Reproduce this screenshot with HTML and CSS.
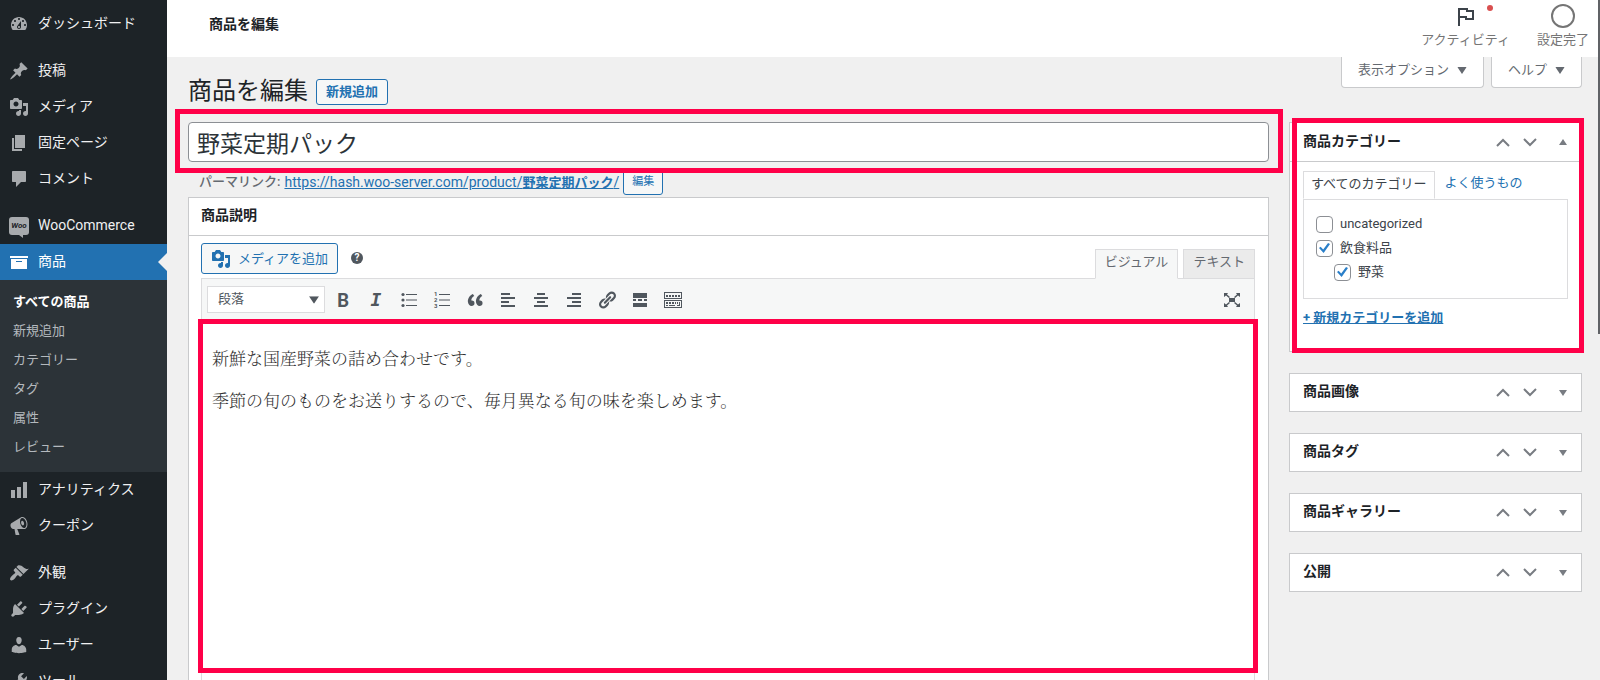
FILE: index.html
```html
<!DOCTYPE html>
<html lang="ja">
<head>
    <meta charset="UTF-8">
    <title>商品を編集</title>
    <link rel="stylesheet" href="styles.css">
</head>
<body>
    <svg class="sprite" aria-hidden="true">
        <symbol id="i-media" viewBox="0 0 20 20"><path d="M13 11V4c0-.55-.45-1-1-1h-1.67L9 1H5L3.67 3H2c-.55 0-1 .45-1 1v7c0 .55.45 1 1 1h10c.55 0 1-.45 1-1zM7 4.5c1.38 0 2.5 1.12 2.5 2.5S8.38 9.5 7 9.5 4.5 8.38 4.5 7 5.62 4.5 7 4.5zM14 6h5v10.500c0 1.38-1.12 2.5-2.5 2.5S14 17.88 14 16.5s1.12-2.5 2.5-2.5c.17 0 .34.02.5.05V9h-3V6zm-4 8.050V13h2v3.5c0 1.38-1.12 2.5-2.5 2.5S7 17.88 7 16.5 8.12 14 9.5 14c.17 0 .34.02.5.05z"/></symbol>
        <symbol id="i-up" viewBox="0 0 14 9"><path d="M1 8l6-6 6 6" fill="none" stroke="currentColor" stroke-width="2"/></symbol>
        <symbol id="i-down" viewBox="0 0 14 9"><path d="M1 1l6 6 6-6" fill="none" stroke="currentColor" stroke-width="2"/></symbol>
        <symbol id="i-tri" viewBox="0 0 8 6"><path d="M0 0h8L4 6z"/></symbol>
        <symbol id="i-tri-up" viewBox="0 0 8 6"><path d="M0 6h8L4 0z"/></symbol>
    </svg>

    <nav class="sidebar">
        <a class="item" href="#"><svg class="icon" viewBox="0 0 20 20"><path fill-rule="evenodd" d="M3.76 16h12.48c1.1-1.37 1.76-3.11 1.76-5 0-4.42-3.58-8-8-8s-8 3.58-8 8c0 1.89.66 3.63 1.76 5zM10 4c.55 0 1 .45 1 1s-.45 1-1 1-1-.45-1-1 .45-1 1-1zM6 6c.55 0 1 .45 1 1s-.45 1-1 1-1-.45-1-1 .45-1 1-1zm8 0c.55 0 1 .45 1 1s-.45 1-1 1-1-.45-1-1 .45-1 1-1zm-5.300 5.500L12 7v6c0 1.100-.9 2-2 2s-2-.9-2-2c0-.57.24-1.080.7-1.500zM4 10c.55 0 1 .45 1 1s-.45 1-1 1-1-.45-1-1 .45-1 1-1zm12 0c.55 0 1 .45 1 1s-.45 1-1 1-1-.45-1-1 .45-1 1-1zm-5 3c0-.55-.45-1-1-1s-1 .45-1 1 .45 1 1 1 1-.45 1-1z"/></svg><span>ダッシュボード</span></a>
        <a class="item group" href="#"><svg class="icon" viewBox="0 0 20 20"><path d="M10.44 3.02l1.82-1.82 6.36 6.35-1.83 1.82c-1.05-.68-2.48-.57-3.41.36l-.75.75c-.92.93-1.04 2.35-.35 3.41l-1.83 1.82-2.41-2.41-2.8 2.79c-.42.42-3.38 2.71-3.8 2.29s1.86-3.39 2.28-3.81l2.79-2.79L4.1 9.36l1.83-1.82c1.05.69 2.48.57 3.4-.36l.75-.75c.93-.92 1.05-2.35.36-3.41z"/></svg><span>投稿</span></a>
        <a class="item" href="#"><svg class="icon"><use href="#i-media"/></svg><span>メディア</span></a>
        <a class="item" href="#"><svg class="icon" viewBox="0 0 20 20"><path d="M6 15V2h10v13H6zm-1 1h8v2H3V5h2v11z"/></svg><span>固定ページ</span></a>
        <a class="item" href="#"><svg class="icon" viewBox="0 0 20 20"><path d="M4 2h12c.6 0 1 .4 1 1v9c0 .6-.4 1-1 1h-4l-5 5v-5H4c-.6 0-1-.4-1-1V3c0-.6.4-1 1-1z"/></svg><span>コメント</span></a>
        <a class="item group" href="#"><span class="woo">Woo</span><span>WooCommerce</span></a>
        <a class="item current" href="#"><svg class="icon" viewBox="0 0 20 20"><path d="M19 4v2H1V4h18zM2 7h16v10H2V7zm11 3V9H7v1h6z"/></svg><span>商品</span></a>
        <div class="submenu">
            <a class="active" href="#">すべての商品</a>
            <a href="#">新規追加</a>
            <a href="#">カテゴリー</a>
            <a href="#">タグ</a>
            <a href="#">属性</a>
            <a href="#">レビュー</a>
        </div>
        <a class="item" href="#"><svg class="icon" viewBox="0 0 20 20"><path d="M18 18V2h-4v16h4zm-6 0V7H8v11h4zm-6 0v-8H2v8h4z"/></svg><span>アナリティクス</span></a>
        <a class="item" href="#"><svg class="icon" viewBox="0 0 20 20"><path d="M18.15 5.94c.46 1.62.38 3.22-.02 4.48-.42 1.28-1.26 2.18-2.3 2.48-.16.06-.26.06-.4.06-.06.02-.12.02-.18.02-.06.02-.14.02-.22.02h-6.8l2.22 5.5c.02.14-.06.26-.14.34-.08.1-.24.16-.34.16H6.95c-.1 0-.26-.06-.34-.16-.08-.08-.16-.2-.14-.34l-1-5.5H4.25l-.02-.02c-.5.06-1.08-.18-1.54-.62s-.88-1.08-1.06-1.88c-.24-.8-.2-1.56-.02-2.2.18-.62.58-1.08 1.06-1.3l.02-.02 9-5.4c.1-.06.18-.1.24-.16.06-.04.14-.08.24-.12.16-.08.28-.12.5-.18 1.04-.3 2.24.1 3.22.98s1.84 2.24 2.26 3.86zm-2.58 5.98h-.02c.4-.1.74-.34 1.04-.7.58-.7.86-1.76.86-3.04 0-.64-.1-1.3-.28-1.98-.34-1.36-1.02-2.5-1.78-3.24s-1.68-1.1-2.46-.88c-.82.22-1.4.96-1.7 2-.32 1.04-.28 2.36.06 3.72.38 1.36 1 2.5 1.8 3.24.78.74 1.62 1.1 2.48.88zm-2.54-7.08c.22-.04.42-.02.62.04.38.16.76.48 1.02 1s.42 1.2.42 1.78c0 .3-.04.56-.12.8-.18.48-.44.84-.86.94-.34.1-.8-.06-1.14-.4s-.64-.86-.78-1.5c-.18-.62-.12-1.24.02-1.72s.48-.84.82-.94z"/></svg><span>クーポン</span></a>
        <a class="item group" href="#"><svg class="icon" viewBox="0 0 20 20"><path d="M14.48 11.06L7.41 3.99l1.5-1.5c.5-.56 2.3-.47 3.51.32 1.21.8 1.43 1.28 2.91 2.1 1.18.64 2.45 1.26 4.45.85zm-.71.71L6.7 4.7 4.93 6.47c-.39.39-.39 1.02 0 1.41l1.06 1.06c.39.39.39 1.03 0 1.42-.6.6-1.43 1.11-2.21 1.69-.35.26-.7.53-1.01.84C1.43 14.23.4 16.08 1.4 17.07c.99 1 2.84-.03 4.18-1.36.31-.31.58-.66.85-1.02.57-.78 1.08-1.61 1.69-2.21.39-.39 1.02-.39 1.41 0l1.06 1.06c.39.39 1.02.39 1.41 0z"/></svg><span>外観</span></a>
        <a class="item" href="#"><svg class="icon" viewBox="0 0 20 20"><path d="M13.11 4.36L9.87 7.6 8 5.73l3.24-3.24c.35-.34 1.05-.2 1.56.32.52.51.66 1.21.31 1.55zm-8 1.77l.91-1.12 9.01 9.01-1.19.84c-.71.71-2.63 1.16-3.82 1.16H6.14L4.9 17.26c-.59.59-1.54.59-2.12 0-.59-.58-.59-1.53 0-2.12l1.24-1.24v-3.88c0-1.13.4-3.19 1.09-3.89zm7.26 3.97l3.24-3.24c.34-.35 1.04-.21 1.55.31.52.51.66 1.21.31 1.55l-3.24 3.25z"/></svg><span>プラグイン</span></a>
        <a class="item" href="#"><svg class="icon" viewBox="0 0 20 20"><path d="M10 9.25c-2.27 0-2.73-3.44-2.73-3.44C7 4.02 7.82 2 9.97 2c2.16 0 2.98 2.02 2.71 3.81 0 0-.41 3.44-2.68 3.44zm0 2.57L12.72 10c2.39 0 4.52 2.33 4.52 4.53v2.49s-3.65 1.13-7.24 1.13c-3.65 0-7.24-1.13-7.24-1.13v-2.49c0-2.25 1.94-4.48 4.47-4.48z"/></svg><span>ユーザー</span></a>
        <a class="item" href="#"><svg class="icon" viewBox="0 0 20 20"><path d="M16.68 9.77c-1.34 1.34-3.3 1.67-4.95.99l-5.41 6.52c-.99.99-2.59.99-3.58 0s-.99-2.59 0-3.57l6.52-5.42c-.68-1.65-.35-3.61.99-4.95 1.28-1.28 3.12-1.62 4.72-1.06l-2.89 2.89 2.82 2.82 2.86-2.87c.53 1.58.18 3.39-1.08 4.65z"/></svg><span>ツール</span></a>
    </nav>

    <div class="page">
        <header class="topbar">
            <strong>商品を編集</strong>
            <div class="activity">
                <button type="button">
                    <svg width="18" height="22" viewBox="0 0 18 22"><path d="M2 20V3h8v2h6v8H9v-2H2" fill="none" stroke="#3c434a" stroke-width="2"/></svg>
                    <span>アクティビティ</span>
                    <i class="dot"></i>
                </button>
                <button type="button">
                    <svg width="24" height="24" viewBox="0 0 24 24"><circle cx="12" cy="12" r="11" fill="none" stroke="#757575" stroke-width="2"/></svg>
                    <span>設定完了</span>
                </button>
            </div>
        </header>

        <div class="columns">
            <main class="main">
                <div class="heading">
                    <h1>商品を編集</h1>
                    <a class="add-new" href="#">新規追加</a>
                </div>
                <div class="title-wrap marked">
                    <input class="title" type="text" value="野菜定期パック" aria-label="商品名">
                </div>
                <div class="permalink">
                    <span>パーマリンク:</span>
                    <a href="#">https://hash.woo-server.com/product/<b>野菜定期パック</b>/</a>
                    <button type="button">編集</button>
                </div>

                <section class="box editor-box">
                    <h2>商品説明</h2>
                    <div class="editor">
                        <div class="editor-tools">
                            <button class="add-media" type="button"><svg class="icon"><use href="#i-media"/></svg>メディアを追加</button>
                            <span class="help">?</span>
                            <div class="editor-tabs">
                                <button class="on" type="button">ビジュアル</button>
                                <button type="button">テキスト</button>
                            </div>
                        </div>
                        <div class="toolbar">
                            <div class="format">
                                <select aria-label="書式"><option>段落</option></select>
                                <svg width="10" height="8" viewBox="0 0 8 6"><use href="#i-tri"/></svg>
                            </div>
                            <button type="button" class="bold">B</button>
                            <button type="button" class="italic">I</button>
                            <button type="button" aria-label="箇条書き"><svg viewBox="0 0 20 20"><path d="M7 4h11v1H7zm0 5.500h11v1H7zM7 15h11v1H7z"/><circle cx="4" cy="4.500" r="1.600"/><circle cx="4" cy="10" r="1.600"/><circle cx="4" cy="15.500" r="1.600"/></svg></button>
                            <button type="button" aria-label="番号付きリスト"><svg viewBox="0 0 20 20"><path d="M7 4h11v1H7zm0 5.500h11v1H7zM7 15h11v1H7z"/><text x="2" y="6">1</text><text x="2" y="12">2</text><text x="2" y="18">3</text></svg></button>
                            <button type="button" aria-label="引用"><svg viewBox="0 0 20 20"><path d="M9.49 13.22c0-.74-.2-1.38-.61-1.9-.62-.78-1.83-.88-2.53-.72-.29-1.65 1.11-3.75 2.92-4.65L7.88 4c-2.73 1.3-5.42 4.28-4.96 8.05C3.21 14.43 4.59 16 6.54 16c.85 0 1.56-.25 2.12-.75s.83-1.18.83-2.03zm8.05 0c0-.74-.2-1.38-.61-1.9-.63-.78-1.83-.88-2.53-.72-.29-1.65 1.11-3.75 2.92-4.65L15.93 4c-2.73 1.3-5.41 4.28-4.95 8.05.29 2.38 1.66 3.95 3.61 3.95.85 0 1.56-.25 2.12-.75s.83-1.18.83-2.03z"/></svg></button>
                            <button type="button" aria-label="左寄せ"><svg viewBox="0 0 20 20"><path d="M3 3h9v2H3zm0 4h14v2H3zm0 4h8v2H3zm0 4h14v2H3z"/></svg></button>
                            <button type="button" aria-label="中央揃え"><svg viewBox="0 0 20 20"><path d="M6 3h8v2H6zM3 7h14v2H3zm3 4h8v2H6zm-3 4h14v2H3z"/></svg></button>
                            <button type="button" aria-label="右寄せ"><svg viewBox="0 0 20 20"><path d="M8 3h9v2H8zM3 7h14v2H3zm5 4h9v2H8zm-5 4h14v2H3z"/></svg></button>
                            <button type="button" aria-label="リンク"><svg viewBox="0 0 20 20"><path d="M17.74 2.76c1.68 1.69 1.68 4.41 0 6.1l-1.53 1.52c-1.12 1.12-2.7 1.47-4.14 1.09l2.62-2.61.76-.77.76-.76c.84-.84.84-2.2 0-3.04-.84-.85-2.2-.85-3.04 0l-.77.76-3.38 3.38c-.37-1.44-.02-3.02 1.1-4.14l1.52-1.53c1.69-1.68 4.42-1.68 6.1 0zM8.59 13.43l5.34-5.34c.42-.42.42-1.1 0-1.52-.44-.43-1.13-.39-1.53 0l-5.33 5.34c-.42.42-.42 1.1 0 1.52.44.43 1.13.39 1.52 0zm-.76 2.29l4.14-4.15c.38 1.44.03 3.02-1.09 4.14l-1.52 1.53c-1.69 1.68-4.41 1.68-6.1 0-1.68-1.68-1.68-4.42 0-6.1l1.53-1.52c1.12-1.12 2.7-1.47 4.14-1.1l-4.14 4.15c-.85.84-.85 2.2 0 3.05.84.84 2.2.84 3.04 0z"/></svg></button>
                            <button type="button" aria-label="続きを読む"><svg viewBox="0 0 20 20"><path d="M3 3h14v5H3zm0 6h3v2H3zm5 0h4v2H8zm6 0h3v2h-3zM3 13h14v4H3z"/></svg></button>
                            <button type="button" aria-label="ツールバー切り替え"><svg viewBox="0 0 20 20"><path fill-rule="evenodd" d="M1 2h18v7H1zm1 1v5h16V3zM1 10h18v8H1zm1 1v6h16v-6zM3 5h2v2H3zm3 0h2v2H6zm3 0h2v2H9zm3 0h2v2h-2zm3 0h2v2h-2zM3 12h2v2H3zm3 0h2v2H6zm3 0h2v2H9zm3 0h1v2h-1zm2 0h1v2h-1zm2 0h1v4h-3v-1h2zM3 15h2v1H3zm3 0h6v1H6z"/></svg></button>
                            <button type="button" class="full" aria-label="集中執筆モード"><svg viewBox="0 0 20 20"><path d="M7 8h6v4H7zM2 3h4L5 4.500 8 7 7 8 4 5.500 2 7zM18 3h-4l1 1.500L12 7l1 1 3-2.500L18 7zM2 17h4l-1-1.500L8 13l-1-1-3 2.500L2 13zM18 17h-4l1-1.500L12 13l1-1 3 2.500 2-1.500z"/></svg></button>
                        </div>
                        <div class="content marked" contenteditable="true">
                            <p>新鮮な国産野菜の詰め合わせです。</p>
                            <p>季節の旬のものをお送りするので、毎月異なる旬の味を楽しめます。</p>
                        </div>
                    </div>
                </section>
            </main>

            <aside class="side">
                <div class="screen-meta">
                    <button type="button">表示オプション<svg width="10" height="7" viewBox="0 0 8 6"><use href="#i-tri"/></svg></button>
                    <button type="button">ヘルプ<svg width="10" height="7" viewBox="0 0 8 6"><use href="#i-tri"/></svg></button>
                </div>
                <section class="box categories marked">
                    <div class="box-head">
                        <h2>商品カテゴリー</h2>
                        <svg width="14" height="9"><use href="#i-up"/></svg>
                        <svg width="14" height="9"><use href="#i-down"/></svg>
                        <svg class="toggle" width="8" height="6"><use href="#i-tri-up"/></svg>
                    </div>
                    <div class="inside">
                        <div class="cat-tabs">
                            <a class="on" href="#">すべてのカテゴリー</a>
                            <a href="#">よく使うもの</a>
                        </div>
                        <div class="cat-panel">
                            <label><input type="checkbox">uncategorized</label>
                            <label><input type="checkbox" checked>飲食料品</label>
                            <label class="child"><input type="checkbox" checked>野菜</label>
                        </div>
                        <a class="add-cat" href="#">+ 新規カテゴリーを追加</a>
                    </div>
                </section>
                <section class="box">
                    <div class="box-head">
                        <h2>商品画像</h2>
                        <svg width="14" height="9"><use href="#i-up"/></svg>
                        <svg width="14" height="9"><use href="#i-down"/></svg>
                        <svg class="toggle" width="8" height="6"><use href="#i-tri"/></svg>
                    </div>
                </section>
                <section class="box">
                    <div class="box-head">
                        <h2>商品タグ</h2>
                        <svg width="14" height="9"><use href="#i-up"/></svg>
                        <svg width="14" height="9"><use href="#i-down"/></svg>
                        <svg class="toggle" width="8" height="6"><use href="#i-tri"/></svg>
                    </div>
                </section>
                <section class="box">
                    <div class="box-head">
                        <h2>商品ギャラリー</h2>
                        <svg width="14" height="9"><use href="#i-up"/></svg>
                        <svg width="14" height="9"><use href="#i-down"/></svg>
                        <svg class="toggle" width="8" height="6"><use href="#i-tri"/></svg>
                    </div>
                </section>
                <section class="box">
                    <div class="box-head">
                        <h2>公開</h2>
                        <svg width="14" height="9"><use href="#i-up"/></svg>
                        <svg width="14" height="9"><use href="#i-down"/></svg>
                        <svg class="toggle" width="8" height="6"><use href="#i-tri"/></svg>
                    </div>
                </section>
            </aside>
        </div>
    </div>
    <div class="scroll-thumb"></div>
</body>
</html>
```
FILE: styles.css
```css
* { box-sizing: border-box; }
body { display: flex; height: 100vh; margin: 0; overflow: hidden; background: #f0f0f0; color: #3c434a; font-family: Roboto, 'Noto Sans CJK JP', sans-serif; font-size: 13px; line-height: 20px; }
button, input, select { font: inherit; color: inherit; }
button { cursor: pointer; padding: 0; }
a { color: #2271b1; }
svg { fill: currentColor; flex: none; }
h1, h2, p { margin: 0; }
.sprite { position: absolute; width: 0; height: 0; }
.icon { width: 20px; height: 20px; }

/* admin menu */
.sidebar { flex: none; width: 167px; padding-top: 6px; background: #1d2327; }
.item { display: flex; align-items: center; gap: 9px; height: 36px; padding-left: 9px; color: #f0f0f1; font-size: 14px; text-decoration: none; }
.item span { padding-bottom: 2px; }
.item .icon { color: #a7aaad; }
.item.group { margin-top: 11px; }
.item.current { position: relative; background: #2271b1; color: #fff; }
.item.current .icon { color: #fff; }
.item.current::after { content: ''; position: absolute; right: 0; top: 9px; border: 9px solid transparent; border-left: 0; border-right-color: #f0f0f0; }
.item .woo { position: relative; width: 20px; height: 18px; padding: 0; border-radius: 3px; background: #a7aaad; color: #1d2327; font-size: 8px; font-weight: 700; font-style: italic; line-height: 18px; text-align: center; }
.woo::after { content: ''; position: absolute; left: 10px; top: 18px; border-top: 3px solid #a7aaad; border-left: 4px solid transparent; }
.submenu { padding: 7px 0 11px; background: #2c3338; }
.submenu a { display: block; padding-left: 13px; color: #b4b9be; line-height: 29px; text-decoration: none; }
.submenu .active { color: #fff; font-weight: 700; }

/* header */
.page { flex: 1; min-width: 0; }
.topbar { display: flex; justify-content: space-between; height: 57px; padding: 0 11px 0 42px; background: #fff; color: #1d2327; font-size: 14px; }
.topbar strong { padding-top: 14px; }
.activity { display: flex; gap: 27px; }
.activity button { position: relative; display: flex; flex-direction: column; align-items: center; justify-content: flex-end; gap: 2px; padding-bottom: 7px; border: 0; background: none; color: #757575; font-size: 13px; }
.dot { position: absolute; right: 17px; top: 5px; width: 6px; height: 6px; border-radius: 50%; background: #d94f4f; }

/* layout */
.columns { display: flex; gap: 20px; padding: 0 18px 0 21px; }
.main { flex: 1; min-width: 0; }
.side { width: 293px; }
.box { background: #fff; border: 1px solid #c9cacc; }
.box h2 { color: #1d2327; font-size: 14px; font-weight: 700; }
.marked { position: relative; }
.marked::after { content: ''; position: absolute; box-sizing: border-box; border: 5px solid #ff0048; pointer-events: none; }

/* title */
.heading { display: flex; align-items: center; gap: 8px; height: 65px; padding-top: 3px; }
.heading h1 { color: #1d2327; font-size: 24px; font-weight: 400; line-height: 32px; }
.add-new { padding: 2px 9px; margin-top: 2px; border: 1px solid #2271b1; border-radius: 3px; background: #f6f7f7; font-weight: 700; text-decoration: none; }
.title-wrap::after { inset: -13px -14px -11px -13px; }
.title { display: block; width: 100%; height: 40px; padding: 0 8px; border: 1px solid #8c8f94; border-radius: 4px; background: #fff; color: #2c3338; font-size: 23px; }
.permalink { display: flex; align-items: center; gap: 4px; height: 35px; padding: 5px 0 0 11px; font-size: 14px; }
.permalink span { color: #646970; font-size: 13px; font-weight: 500; }
.permalink b { font-size: 13px; }
.permalink button { height: 26px; padding: 0 8px; border: 1px solid #2271b1; border-radius: 3px; background: #f6f7f7; color: #2271b1; font-size: 11px; }

/* editor */
.editor-box h2 { padding: 7px 12px 10px; border-bottom: 1px solid #c9cacc; }
.editor { padding: 7px 13px 0 12px; }
.editor-tools { display: flex; align-items: flex-start; }
.add-media { display: flex; align-items: center; gap: 7px; height: 31px; padding: 0 9px; border: 1px solid #2271b1; border-radius: 3px; background: #f6f7f7; color: #2271b1; }
.help { width: 12px; height: 12px; margin: 9px 0 0 13px; border-radius: 50%; background: #50575e; color: #fff; font-size: 10px; font-weight: 700; line-height: 12px; text-align: center; }
.editor-tabs { display: flex; gap: 5px; margin: 6px 0 -1px auto; }
.editor-tabs button { height: 30px; padding: 0 9px 4px; border: 1px solid #dcdcde; background: #ebebeb; color: #646970; }
.editor-tabs .on { position: relative; border-bottom-color: #f6f7f7; background: #f6f7f7; }
.toolbar { display: flex; align-items: center; height: 42px; padding: 0 10px 0 5px; border: 1px solid #dcdcde; border-bottom: 0; background: #f6f7f7; color: #50575e; }
.toolbar button { width: 20px; height: 20px; margin-right: 13px; border: 0; background: none; }
.toolbar button svg { display: block; width: 20px; height: 20px; }
.toolbar text { font-size: 6px; font-weight: 700; }
.toolbar .bold { font-family: Lato, sans-serif; font-size: 18px; font-weight: 900; }
.toolbar .italic { font-family: 'DejaVu Sans Mono', monospace; font-size: 18px; font-style: italic; font-weight: 700; }
.toolbar .full { margin: 0 2px 0 auto; }
.format { position: relative; margin-right: 8px; }
.format select { display: block; appearance: none; width: 118px; height: 27px; padding: 0 10px 2px; border: 1px solid #dcdcde; border-radius: 0; background: #fff; }
.format svg { position: absolute; right: 6px; top: 10px; }
.content { min-height: 400px; padding: 25px 10px 0; border: 1px solid #dcdcde; border-top: 0; color: #333; font-family: 'Noto Serif CJK JP', 'Noto Sans CJK JP', serif; font-size: 17px; font-weight: 300; line-height: 25px; outline: 0; }
.content p { margin-bottom: 17px; }
.content::after { inset: -1px -4px auto -4px; height: 354px; }

/* right column */
.screen-meta { display: flex; justify-content: flex-end; gap: 7px; height: 65px; }
.screen-meta button { display: flex; align-items: center; gap: 8px; height: 31px; padding: 0 16px 4px; border: 1px solid #c9cacc; border-top: 0; border-radius: 0 0 4px 4px; background: #fff; color: #646970; }
.side .box { margin-bottom: 21px; }
.box-head { display: flex; align-items: center; gap: 13px; height: 37px; padding-right: 14px; color: #787c82; }
.box-head h2 { flex: 1; padding: 0 0 3px 13px; }
.box-head .toggle { margin-left: 9px; }
.categories { height: 230px; }
.categories::after { inset: -5px -3px -2px 2px; }
.categories .box-head { height: 39px; border-bottom: 1px solid #c9cacc; }
.inside { padding: 9px 13px; }
.cat-tabs { display: flex; }
.cat-tabs a { height: 28px; padding: 2px 10px; text-decoration: none; }
.cat-tabs .on { position: relative; margin-bottom: -1px; padding: 2px 7px; border: 1px solid #dcdcde; border-bottom-color: #fff; background: #fff; color: #3c434a; }
.cat-panel { display: flex; flex-direction: column; gap: 4px; height: 100px; padding: 14px 12px; border: 1px solid #dcdcde; }
.cat-panel label { display: flex; align-items: center; gap: 7px; }
.cat-panel .child { padding-left: 18px; }
.cat-panel input { appearance: none; display: grid; place-items: center; width: 17px; height: 17px; margin: 0; border: 1px solid #8c8f94; border-radius: 4px; background: #fff; }
.cat-panel input:checked::before { content: ''; width: 11px; height: 10px; background: #2a7fc9; clip-path: polygon(0 50%, 15% 38%, 38% 65%, 82% 0, 100% 10%, 42% 100%); }
.add-cat { display: inline-block; margin-top: 9px; font-weight: 700; }

.scroll-thumb { position: fixed; right: 0; top: 0; width: 2px; height: 334px; background: #606266; }
```
